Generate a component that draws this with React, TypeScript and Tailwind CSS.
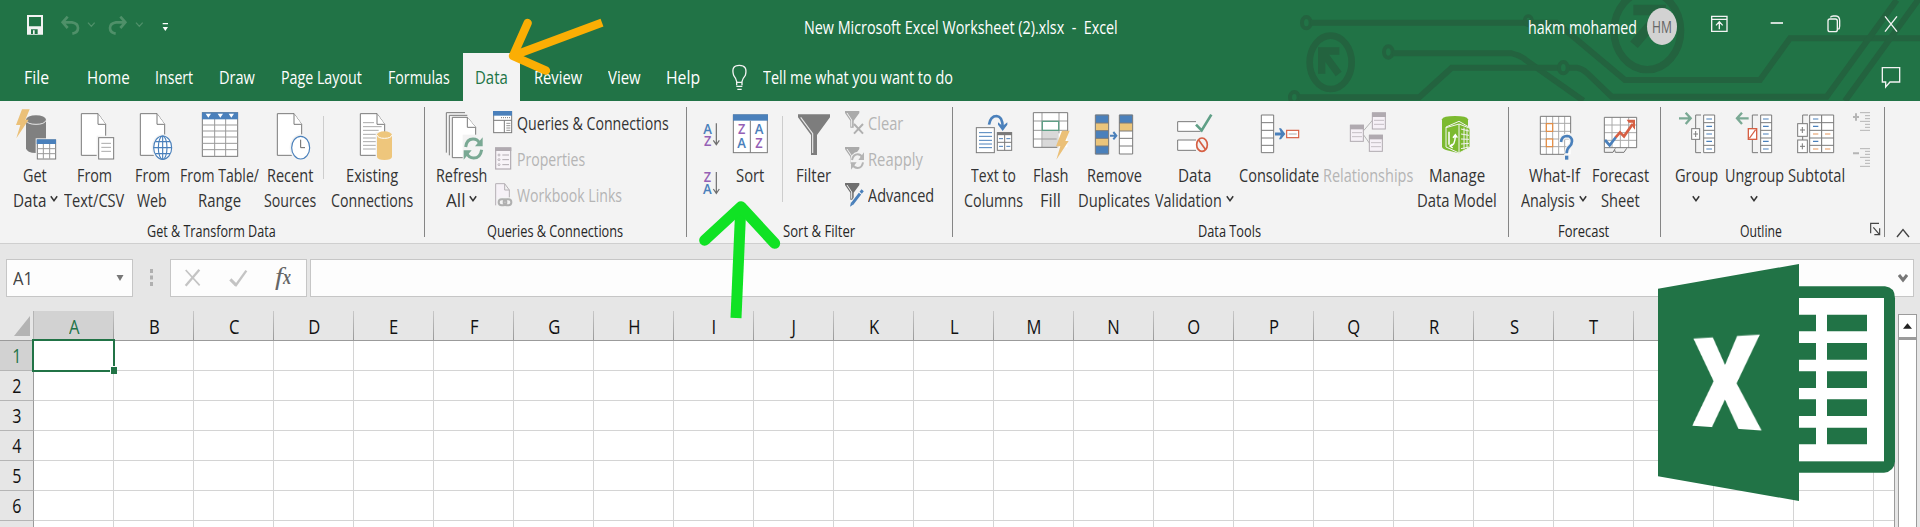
import React, { useLayoutEffect, useRef, ReactNode } from "react";

/** Single line of text condensed (or widened) to fill the width of its box. */
function Fit({ children, className = "" }: { children: ReactNode; className?: string }) {
  const box = useRef<HTMLSpanElement>(null);
  const inner = useRef<HTMLSpanElement>(null);
  useLayoutEffect(() => {
    if (box.current && inner.current) {
      const s = box.current.clientWidth / inner.current.offsetWidth;
      inner.current.style.transform = `scaleX(${s})`;
    }
  });
  return (
    <span ref={box} className={`block shrink-0 ${className}`}>
      <span ref={inner} className="inline-block origin-left whitespace-pre">
        {children}
      </span>
    </span>
  );
}

function Pic({ vb, className, children }: { vb: string; className: string; children: ReactNode }) {
  return (
    <svg viewBox={vb} className={`shrink-0 ${className}`} preserveAspectRatio="none" fill="none">
      {children}
    </svg>
  );
}

function Chevron({ className = "" }: { className?: string }) {
  return (
    <svg viewBox="0 0 8 8" className={`h-2 w-2 shrink-0 ${className}`} fill="none" stroke="currentColor" strokeWidth="1.5">
      <path d="M0.8 1.2 L4 5.6 L7.2 1.2" />
    </svg>
  );
}

type Line = [string, string];

function Big({ w, vb, icon, lines, arrow, arrowBelow, off }: {
  w: string; vb: string; icon: ReactNode; lines: Line[]; arrow?: boolean; arrowBelow?: boolean; off?: boolean;
}) {
  return (
    <div className={`flex shrink-0 flex-col items-center ${w} ${off ? "text-[#b5b5b5]" : "text-[#333]"}`}>
      <Pic vb={vb} className="mb-px h-[61px] w-full">{icon}</Pic>
      {lines.map(([t, tw], i) => (
        <div key={t} className="flex h-[25px] items-center gap-[4px] text-[18px] leading-[25px]">
          <Fit className={tw}>{t}</Fit>
          {arrow && i === lines.length - 1 && <Chevron className="-mt-1" />}
        </div>
      ))}
      {arrowBelow && <div className="flex h-[25px] items-center"><Chevron className="-mt-1" /></div>}
    </div>
  );
}

function Small({ vb, icon, text, w, off }: { vb: string; icon: ReactNode; text: string; w: string; off?: boolean }) {
  return (
    <div className={`flex h-9 items-center gap-[2px] text-[18px] leading-[25px] ${off ? "text-[#b5b5b5]" : "text-[#333]"}`}>
      <Pic vb={vb} className="h-9 w-[22px]">{icon}</Pic>
      <Fit className={w}>{text}</Fit>
    </div>
  );
}

function Group({ w, label, lw, extra, pad = "", children }: {
  w: string; label: string; lw: string; extra?: ReactNode; pad?: string; children: ReactNode;
}) {
  return (
    <div className={`flex h-[142px] shrink-0 ${w}`}>
      <div className="flex min-w-0 flex-1 flex-col">
        <div className={`flex h-[119px] ${pad}`}>{children}</div>
        <div className="flex h-[22px] justify-center text-[16px] leading-[22px] text-[#262626]">
          <Fit className={lw}>{label}</Fit>
          {extra}
        </div>
      </div>
      <div className="mt-[6px] h-[130px] w-px bg-[#858585]" />
    </div>
  );
}

const G = "#7a7a7a";
const B = "#4a80bb";

const Page = ({ x }: { x: number }) => (
  <g stroke={G} strokeWidth="3" fill="#fff">
    <path d={`M${x} 341 H${x + 50} L${x + 73} 373 V466 H${x} Z`} />
    <path d={`M${x + 50} 341 V373 H${x + 73}`} />
  </g>
);

const Bolt = ({ x, y }: { x: number; y: number }) => (
  <path d={`M${x + 18} ${y} H${x + 41} L${x + 28} ${y + 31} H${x + 38} L${x + 1} ${y + 87} L${x + 13} ${y + 47} H${x} Z`} fill="#ebc078" />
);

const getData = (
  <>
    <path d="M78 359 V445 Q80 459 108 459 Q138 459 138 445 V359 Z" fill="#808080" />
    <ellipse cx="108" cy="359" rx="30" ry="13" fill="#808080" />
    <path d="M78 361 Q82 373 108 373 Q134 373 138 361" stroke="#e8e8e8" strokeWidth="3" />
    <Bolt x={48} y={328} />
    <rect x="107" y="415" width="65" height="67" fill="#f3f3f3" />
    <rect x="112" y="420" width="55" height="57" fill="#fff" stroke={G} strokeWidth="3" />
    <rect x="110" y="418" width="58" height="14" fill={B} />
    <path d="M130 432 V476 M149 432 V476 M112 446 H167 M112 461 H167" stroke="#999" strokeWidth="3" />
  </>
);
const fromCsv = (
  <>
    <Page x={244} />
    <rect x="290" y="407" width="56" height="76" fill="#f3f3f3" />
    <rect x="296" y="413" width="45" height="64" fill="#fff" stroke={G} strokeWidth="3" />
    <path d="M304 430 H333 M304 442 H333 M304 454 H333" stroke="#aaa" strokeWidth="3" />
  </>
);
const fromWeb = (
  <>
    <Page x={421} />
    <ellipse cx="488" cy="443" rx="33" ry="40" fill="#f3f3f3" />
    <g stroke={B} strokeWidth="3.4" fill="#fff">
      <ellipse cx="488" cy="443" rx="27" ry="35" />
      <ellipse cx="488" cy="443" rx="13" ry="35" />
      <path d="M488 408 V478 M461 443 H515 M466 425 H510 M466 461 H510" />
    </g>
  </>
);
const fromTable = (
  <>
    <rect x="607" y="338" width="106" height="131" fill="#fff" stroke={G} strokeWidth="3" />
    <path d="M644 357 V469 M677 357 V469 M607 375 H713 M607 393 H713 M607 411 H713 M607 430 H713 M607 449 H713" stroke="#999" strokeWidth="3" />
    <rect x="606" y="337" width="108" height="21" fill={B} />
    <path d="M617 341 h16 l-8 12z M653 341 h16 l-8 12z M686 341 h16 l-8 12z" fill="#fff" />
  </>
);
const recent = (
  <>
    <Page x={832} />
    <ellipse cx="902" cy="443" rx="33" ry="40" fill="#f3f3f3" />
    <ellipse cx="902" cy="443" rx="27" ry="34" fill="#fff" stroke={B} strokeWidth="3.5" />
    <path d="M902 419 V443 H915" stroke="#666" strokeWidth="3" />
  </>
);
const existing = (
  <>
    <Page x={1081} />
    <path d="M1089 368 H1122 M1089 380 H1145 M1089 391 H1136 M1089 403 H1136 M1089 414 H1130 M1089 425 H1130 M1089 436 H1130 M1089 447 H1130" stroke="#aaa" strokeWidth="3" />
    <path d="M1127 396 H1180 V482 H1127 Z" fill="#f3f3f3" />
    <path d="M1131 405 V471 Q1133 480 1153 480 Q1174 480 1176 471 V405 Z" fill="#eec67c" />
    <ellipse cx="1153" cy="405" rx="23" ry="11" fill="#eec67c" />
    <path d="M1131 405 Q1134 415 1153 415 Q1173 415 1176 405" stroke="#fff" strokeWidth="3" />
  </>
);
const refreshAll = (
  <>
    <g stroke={G} strokeWidth="3" fill="#fff">
      <path d="M1339 458 V338 H1395 M1348 466 V346 H1402" fill="none" />
      <path d="M1357 352 H1402 L1427 382 V473 H1357 Z" />
      <path d="M1402 352 V382 H1427" />
    </g>
    <rect x="1388" y="404" width="66" height="80" fill="#f3f3f3" />
    <g stroke="#7aa994" strokeWidth="9">
      <path d="M1397 441 Q1400 417 1419 417 Q1433 417 1439 430" />
      <path d="M1445 449 Q1441 474 1421 474 Q1406 474 1400 459" />
    </g>
    <path d="M1448 412 V439 H1425 Z M1391 479 V451 H1415 Z" fill="#7aa994" />
  </>
);
const qcIcon = (
  <>
    <rect x="41" y="335" width="54" height="63" fill="#fff" stroke={G} strokeWidth="3" />
    <rect x="39" y="333" width="57" height="14" fill={B} />
    <path d="M63 353 H92" stroke={G} strokeWidth="3" strokeDasharray="3 3" />
    <path d="M41 361 H95 M73 361 V398" stroke={G} strokeWidth="3" />
    <path d="M79 370 H91 M79 377 H91 M79 384 H91 M79 391 H91" stroke={G} strokeWidth="2.4" />
  </>
);
const propIcon = (
  <>
    <rect x="47" y="444" width="45" height="63" fill="#f8f4f8" stroke="#b0aab0" strokeWidth="3.5" />
    <rect x="45" y="442" width="49" height="11" fill="#b0aab0" />
    <path d="M67 465 H87 M67 479 H87 M67 494 H87" stroke="#b0aab0" strokeWidth="3" />
    <g stroke="#b0aab0" strokeWidth="2.5"><circle cx="57" cy="465" r="3" /><circle cx="57" cy="479" r="3" /><circle cx="57" cy="494" r="3" /></g>
  </>
);
const linkIcon = (
  <>
    <path d="M47 616 V551 H74 L88 570 V595 M74 551 V570 H88" fill="#f6f1f7" stroke="#b5b0b5" strokeWidth="3" />
    <rect x="51" y="592" width="48" height="32" fill="#f3f3f3" />
    <g stroke="#b0b0b0" strokeWidth="6"><rect x="56" y="598" width="23" height="18" rx="9" /><rect x="71" y="598" width="23" height="18" rx="9" /></g>
  </>
);

const iconFont = { fontFamily: "Open Sans, sans-serif", fontWeight: 600 } as const;
const V = "#9560b5";

/** Two letters stacked in one column; A is blue, Z is violet. */
const LetterColumn = ({ x, y, gap, order }: { x: number; y: number; gap: number; order: string }) => (
  <text fontSize="45">
    {[...order].map((c, i) => (
      <tspan key={c} x={c === "A" ? x : x + 2} y={y + i * gap} fill={c === "A" ? B : V} textLength={c === "A" ? 26 : 22} lengthAdjust="spacingAndGlyphs">
        {c}
      </tspan>
    ))}
  </text>
);

const sortPair = (
  <g {...iconFont}>
    <LetterColumn x={670} y={403} gap={35} order="AZ" />
    <LetterColumn x={669} y={546} gap={37} order="ZA" />
    <path d="M709 370 V433 M700 421 L709 434 L718 421 M709 516 V579 M700 567 L709 580 L718 567" stroke="#6e6e6e" strokeWidth="3.6" />
  </g>
);
const sortIcon = (
  <g {...iconFont}>
    <rect x="760" y="345" width="102" height="113" fill="#fff" stroke={G} strokeWidth="3" />
    <rect x="759" y="343" width="105" height="19" fill={B} />
    <path d="M811 362 V458" stroke={G} strokeWidth="3" />
    <LetterColumn x={772} y={403} gap={42} order="ZA" />
    <LetterColumn x={824} y={403} gap={42} order="AZ" />
  </g>
);
const filterIcon = (
  <>
    <path d="M954 343 H1050 V352 L1011 405 V465 H993 V405 L954 352 Z" fill="#7d7d7d" />
    <path d="M962 352 L998 401 V459" stroke="#e8e8e8" strokeWidth="3.5" />
  </>
);
const Funnel = ({ y, c }: { y: number; c: string }) => (
  <>
    <path d={`M1095 ${y} H1138 V${y + 6} L1121 ${y + 29} V${y + 50} H1111 V${y + 29} L1095 ${y + 6} Z`} fill={c} />
    <path d={`M1101 ${y + 6} L1115 ${y + 27} V${y + 47}`} stroke="#f0f0f0" strokeWidth="3" />
  </>
);
const clearIcon = (
  <><Funnel y={333} c="#aaa" /><path d="M1122 372 L1149 401 M1149 372 L1122 401" stroke="#b0b0b0" strokeWidth="6" /></>
);
const reapplyIcon = (
  <>
    <Funnel y={441} c="#aaa" />
    <ellipse cx="1133" cy="483" rx="22" ry="28" fill="#f3f3f3" />
    <g stroke="#b4b4b4" strokeWidth="6"><path d="M1116 480 Q1120 463 1133 463 Q1143 463 1147 473" /><path d="M1149 487 Q1146 504 1133 504 Q1122 504 1118 494" /></g>
    <path d="M1152 457 V480 H1135 Z M1113 509 V487 H1130 Z" fill="#b4b4b4" />
  </>
);
const advIcon = (
  <>
    <Funnel y={549} c="#6f6f6f" />
    <path d="M1118 610 L1145 574" stroke="#f3f3f3" strokeWidth="15" />
    <path d="M1117 611 L1140 581 M1142 578 L1148 571" stroke={B} strokeWidth="9" />
    <path d="M1110 620 L1113 607 L1121 613 Z" fill={B} />
  </>
);
const textCols = (
  <>
    <rect x="49" y="383" width="54" height="75" fill="#fff" stroke={G} strokeWidth="3" />
    <path d="M57 398 H96 M57 409 H96 M57 421 H96 M57 432 H96 M57 443 H96" stroke={B} strokeWidth="3" />
    <rect x="112" y="398" width="43" height="53" fill="#fff" stroke={G} strokeWidth="3" />
    <path d="M111 401 H156" stroke={G} strokeWidth="9" />
    <path d="M134 405 V451 M112 427 H155" stroke={G} strokeWidth="3" />
    <path d="M117 416 H129 M139 416 H151 M117 439 H129 M139 439 H151" stroke={B} strokeWidth="3" />
    <path d="M87 374 Q91 348 110 348 Q127 349 128 380" stroke={B} strokeWidth="8" />
    <path d="M114 367 L128 378 L142 367 V374 L128 393 L114 374 Z" fill={B} />
  </>
);
const flash = (
  <>
    <rect x="220" y="338" width="102" height="104" fill="#fff" />
    <rect x="248" y="390" width="48" height="52" fill="#d9d9d9" />
    <path d="M246 338 V442 M297 338 V400 M220 363 H323 M220 391 H323 M220 417 H290" stroke="#999" strokeWidth="3" />
    <path d="M323 395 V338 H220 V442 H292" stroke={G} strokeWidth="3" />
    <rect x="247" y="364" width="49" height="27" fill="#fff" stroke="#5f9f86" strokeWidth="4" />
    <Bolt x={288} y={392} />
  </>
);
const remove = (
  <>
    <rect x="406" y="344" width="40" height="119" fill={B} />
    <path d="M406 369 H446 V392 H406 Z M406 415 H446 V438 H406 Z" fill="#ebc57b" />
    <rect x="478" y="344" width="40" height="119" fill="#fff" />
    <rect x="478" y="344" width="40" height="25" fill={B} />
    <rect x="478" y="369" width="40" height="24" fill="#ebc57b" />
    <path d="M406 345 H446 V462 H406 Z M406 369 H446 M406 392 H446 M406 415 H446 M406 438 H446 M478 345 H518 V462 H478 Z M478 369 H518 M478 393 H518 M478 415 H518 M478 438 H518" stroke={G} strokeWidth="3" />
    <path d="M450 407 H468 M460 396 L469 407 L460 418" stroke={B} strokeWidth="6" />
  </>
);
const validation = (
  <>
    <path d="M708 365 H653 V394 H722 M708 420 H653 V451 H708" fill="#fff" stroke={G} strokeWidth="3" />
    <path d="M708 374 L725 391 L754 344" stroke="#5f9f86" strokeWidth="8" />
    <ellipse cx="726" cy="434" rx="16" ry="20" fill="#f3f3f3" stroke="#d65f43" strokeWidth="5" />
    <path d="M716 420 L737 449" stroke="#d65f43" strokeWidth="5" />
  </>
);
const consolidate = (
  <>
    <path d="M904 345 H941 V458 H904 Z M904 368 H941 M904 391 H941 M904 414 H941 M904 436 H941" fill="#fff" stroke={G} strokeWidth="3" />
    <path d="M945 402 H968" stroke={B} strokeWidth="9" />
    <path d="M957 385 H963 L976 402 L963 418 H957 L964 402 Z" fill={B} />
    <rect x="980" y="391" width="36" height="22" fill="#fff" stroke="#d65f43" strokeWidth="3.5" />
    <path d="M986 402 H1010" stroke="#aaa" strokeWidth="3" />
  </>
);
const MiniTable = ({ x, y }: { x: number; y: number }) => (
  <>
    <rect x={x + 1} y={y + 2} width="39" height="48" fill="#f6f1f7" stroke="#b0aab0" strokeWidth="3" />
    <rect x={x} y={y} width="42" height="14" fill="#b0aab0" />
    <path d={`M${x + 6} ${y + 24} h30 M${x + 6} ${y + 36} h30`} stroke="#c5bfc5" strokeWidth="3" />
  </>
);
const relations = (
  <>
    <path d="M1211 392 L1238 360 M1211 405 L1230 432" stroke="#b5b5b5" strokeWidth="3" />
    <MiniTable x={1236} y={337} /><MiniTable x={1170} y={374} /><MiniTable x={1227} y={404} />
  </>
);
const model = (
  <>
    <path d="M6 358 Q9 348 45 348 Q81 348 84 358 V440 L57 460 L18 450 Q6 445 6 440 Z" fill="#7cba30" />
    <path d="M18 381 L57 364 L90 383 V442 L57 459 L18 441 Z" fill="#7cba30" stroke="#f3f3f3" strokeWidth="3" />
    <path d="M18 383 L57 372 V458 M57 372 L90 385" stroke="#f3f3f3" strokeWidth="3" />
    <path d="M63 387 L87 393 M63 402 L87 406 M63 417 L87 418 M63 432 L87 430 M63 446 L87 441 M72 383 V448 M81 386 V444" stroke="#f3f3f3" strokeWidth="3" />
    <path d="M27 395 V434 M46 408 Q45 436 31 438 M38 432 L30 438 L38 444 M39 413 L46 404 L52 413" stroke="#fff" strokeWidth="4.5" />
  </>
);
const whatIf = (
  <>
    <rect x="301" y="349" width="91" height="114" fill="#fff" />
    <path d="M319 349 V463 M338 349 V463 M356 349 V463 M374 349 V463 M301 370 H392 M301 394 H392 M301 417 H392 M301 440 H392" stroke="#aaa" strokeWidth="3" />
    <path d="M392 400 V349 H301 V463 H372" stroke={G} strokeWidth="3" />
    <g fill="#fff" stroke="#e58a3c" strokeWidth="3.5"><rect x="319" y="371" width="19" height="23" /><rect x="319" y="417" width="19" height="23" /></g>
    <path d="M363 426 Q365 408 381 408 Q396 409 396 424 Q396 433 388 440 Q380 448 380 460" stroke="#f3f3f3" strokeWidth="15" />
    <path d="M363 426 Q365 408 381 408 Q396 409 396 424 Q396 433 388 440 Q380 448 380 460" stroke={B} strokeWidth="8" />
    <rect x="375" y="467" width="10" height="12" fill={B} />
  </>
);
const forecast = (
  <>
    <rect x="493" y="352" width="97" height="91" fill="#fff" />
    <path d="M516 352 V443 M541 352 V443 M566 352 V443 M493 375 H590 M493 398 H590 M493 421 H590" stroke="#aaa" strokeWidth="3" />
    <path d="M493 443 V352 H590 V443 H493 M493 443 V457 H519 L526 445 M526 457 H552 L560 445 M526 457 L524 450" stroke={G} strokeWidth="3" />
    <path d="M495 420 L509 436 L528 411" stroke={B} strokeWidth="8" />
    <path d="M527 412 L540 397 L552 409 L578 372" stroke="#d65f43" strokeWidth="8" />
    <path d="M560 359 H585 V389 L578 381 V368 H566 Z" fill="#d65f43" />
  </>
);
const Stack = ({ x, w = 33 }: { x: number; w?: number }) => (
  <path d={`M${x} 345 h${w} v113 h-${w} z M${x} 368 h${w} M${x} 391 h${w} M${x} 414 h${w} M${x} 436 h${w}`} fill="#fff" stroke={G} strokeWidth="3" />
);
const Dashes = ({ x }: { x: number }) => (
  <path d={`M${x} 357 h17 M${x} 379 h17 M${x} 402 h17 M${x} 424 h17 M${x} 447 h17`} stroke={B} strokeWidth="3.5" />
);
const groupIcon = (
  <>
    <Stack x={791} /><Dashes x={799} />
    <path d="M783 345 H767 V458 H783" stroke={G} strokeWidth="3" />
    <rect x="755" y="386" width="24" height="32" fill="#fff" stroke={G} strokeWidth="3" />
    <path d="M760 402 H774 M767 393 V411" stroke={G} strokeWidth="3" />
    <path d="M717 355 H751 M737 338 L752 355 L737 372" stroke="#7aa994" strokeWidth="7" />
  </>
);
const ungroupIcon = (
  <>
    <Stack x={962} /><Dashes x={969} />
    <path d="M954 345 H937 V458 H954" stroke={G} strokeWidth="3" />
    <rect x="925" y="386" width="25" height="32" fill="#fff" stroke="#d65f43" strokeWidth="4" />
    <path d="M928 415 L947 389" stroke="#d65f43" strokeWidth="3.5" />
    <path d="M926 355 H892 M906 338 L891 355 L906 372" stroke="#7aa994" strokeWidth="7" />
  </>
);
const subtotalIcon = (
  <>
    <path d="M1104 345 H1088 V450" stroke={G} strokeWidth="3" />
    <Stack x={1109} w={36} /><Stack x={1145} w={36} />
    <path d="M1119 357 h16 M1119 379 h16 M1119 424 h16" stroke={B} strokeWidth="3.5" />
    <path d="M1119 402 h16 M1155 402 h16 M1119 447 h16 M1155 447 h16" stroke="#e5965a" strokeWidth="3.5" />
    <g fill="#fff" stroke={G} strokeWidth="3">
      <rect x="1073" y="371" width="29" height="38" /><rect x="1073" y="420" width="29" height="38" />
      <path d="M1080 390 H1095 M1087 381 V399 M1080 439 H1095 M1087 430 V448" />
    </g>
  </>
);
const detail = (
  <g stroke="#b5b5b5" strokeWidth="3">
    <path d="M1239 351 H1257 M1248 340 V362 M1239 460 H1257" strokeWidth="6" />
    <path d="M1260 338 H1290 M1275 347 H1290 M1275 356 H1290 M1260 364 H1290 M1275 373 H1290 M1275 382 H1290 M1260 391 H1290" />
    <path d="M1260 446 H1290 M1275 454 H1290 M1275 463 H1290 M1260 472 H1290 M1275 481 H1290 M1275 490 H1290 M1260 499 H1290" />
  </g>
);

const tabs: [string, string, string][] = [
  ["File", "w-[73px]", "w-[25px]"],
  ["Home", "w-[70px]", "w-[43px]"],
  ["Insert", "w-[62px]", "w-[38px]"],
  ["Draw", "w-[63px]", "w-[36px]"],
  ["Page Layout", "w-[106px]", "w-[81px]"],
  ["Formulas", "w-[89px]", "w-[62px]"],
  ["Data", "w-[57px]", "w-[33px]"],
  ["Review", "w-[75px]", "w-[48px]"],
  ["View", "w-[58px]", "w-[33px]"],
  ["Help", "w-[60px]", "w-[34px]"],
];

const columns = [..."ABCDEFGHIJKLMNOPQRST", "", "", ""];

function Header() {
  return (
    <header className="relative h-[101px] bg-[#217346] text-white">
      <svg viewBox="960 0 1920 303" className="absolute right-0 top-0 h-[101px] w-[640px]" preserveAspectRatio="none" fill="none" stroke="#23633f" strokeWidth="18">
        <ellipse cx="1039" cy="68" rx="13" ry="17" strokeWidth="12" />
        <path d="M1052 68 H1790 L1995 240 H2400 L2490 115 H2880" />
        <ellipse cx="1705" cy="62" rx="11" ry="14" strokeWidth="11" />
        <ellipse cx="1112" cy="187" rx="63" ry="80" strokeWidth="20" />
        <path d="M1138 153 H1085 V221 M1087 155 L1136 222" strokeWidth="22" />
        <ellipse cx="1285" cy="156" rx="13" ry="17" strokeWidth="12" />
        <path d="M1298 160 H1655 Q1680 165 1700 182 L1870 302" />
        <ellipse cx="1003" cy="292" rx="13" ry="16" strokeWidth="12" />
        <path d="M1016 292 H1378 L1475 203 H1797 M1823 203 H1850 Q1866 206 1880 218 L1955 290 H2600 L2810 0 M2655 303 L2880 -8" />
        <ellipse cx="1810" cy="203" rx="13" ry="17" strokeWidth="12" />
        <ellipse cx="2062" cy="92" rx="100" ry="117" strokeWidth="22" />
        <path d="M2020 30 H2118" strokeWidth="32" />
        <path d="M2022 134 L2080 66" strokeWidth="30" />
      </svg>
      <div className="relative flex h-[53px] items-center">
        <svg viewBox="0 0 480 159" className="h-[53px] w-[160px] shrink-0" fill="none" preserveAspectRatio="none">
          <path d="M81 45 H129 V104 H81 Z M87 51 V79 H123 V51 Z M93 88 V102 H99 V91 H104 V102 H113 V88 Z" fill="#f3f3f3" fillRule="evenodd" />
          <g stroke="#4f9069" strokeWidth="8">
            <path d="M188 67 H216 Q234 70 234 84 Q234 98 217 101 M203 50 L188 67 L203 84" />
            <path d="M376 67 H348 Q330 70 330 84 Q330 98 347 101 M361 50 L376 67 L361 84" />
            <path d="M264 68 L274 79 L284 68 M408 68 L418 79 L428 68" strokeWidth="4" />
          </g>
        </svg>
        <svg viewBox="480 65 36 30" className="mt-[1px] h-[10px] w-[12px] shrink-0" fill="#fff" preserveAspectRatio="none">
          <path d="M488 68 H504 V72 H488 Z M488 80 H504 L496 92 Z" />
        </svg>
        <Fit className="ml-[632px] w-[314px] text-[18.5px] leading-[24px]">{"New Microsoft Excel Worksheet (2).xlsx  -  Excel"}</Fit>
        <Fit className="ml-[410px] w-[109px] text-[18.5px] leading-[24px]">hakm mohamed</Fit>
        <div className="ml-[10px] flex h-[37px] w-[30px] shrink-0 items-center justify-center rounded-[50%] bg-[#d2d2d2] text-[17px] leading-[24px] text-[#666]">
          <Fit className="w-[20px]">HM</Fit>
        </div>
        <svg viewBox="735 0 705 159" className="ml-auto h-[53px] w-[235px] shrink-0" preserveAspectRatio="none" fill="none" stroke="#f3f3f3" strokeWidth="4">
          <path d="M815 49 H861 V94 H815 Z M815 58 H861 M838 88 V66 M828 76 L838 65 L848 76" />
          <path d="M992 69 H1029" strokeWidth="5" />
          <rect x="1164" y="57" width="28" height="38" rx="6" />
          <path d="M1171 52 Q1174 48 1180 48 H1188 Q1199 49 1199 62 V78 Q1199 86 1195 88" />
          <path d="M1335 49 L1371 95 M1371 49 L1335 95" />
        </svg>
      </div>
      <nav className="relative flex h-12 text-[19px] leading-[48px]">
        {tabs.map(([name, w, tw]) => (
          <div key={name} className={`flex shrink-0 justify-center ${w} ${name === "Data" ? "bg-[#f3f3f3] text-[#217346]" : ""}`}>
            <Fit className={tw}>{name}</Fit>
          </div>
        ))}
        <svg viewBox="750 159 60 144" className="ml-[17px] h-12 w-5 shrink-0" preserveAspectRatio="none" fill="none" stroke="#f3f3f3" strokeWidth="4">
          <path d="M770 256 V245 Q768 235 761 226 Q752 196 778 196 Q804 196 796 226 Q788 235 786 245 V256 M770 247 H786 M769 259 H787 M772 268 H785" />
        </svg>
        <Fit className="ml-[13px] w-[190px]">Tell me what you want to do</Fit>
        <svg viewBox="1320 159 66 144" className="ml-auto mr-[18px] h-12 w-[22px] shrink-0" preserveAspectRatio="none" fill="none" stroke="#f3f3f3" strokeWidth="4">
          <path d="M1327 203 H1379 V246 H1350 L1337 261 V246 H1327 Z" />
        </svg>
      </nav>
    </header>
  );
}

function Ribbon() {
  return (
    <section className="flex h-[143px] border-b border-[#cfcfcf] bg-[#f3f3f3]">
      <Group w="w-[425px]" label="Get & Transform Data" lw="w-[129px] -ml-[2px]" pad="pl-[5px]">
        <Big w="w-[60px]" vb="15 303 180 183" icon={getData} lines={[["Get", "w-[24px]"], ["Data", "w-[33px]"]]} arrow />
        <Big w="w-[58px]" vb="195 303 174 183" icon={fromCsv} lines={[["From", "w-[35px]"], ["Text/CSV", "w-[60px]"]]} />
        <Big w="w-[58px]" vb="369 303 174 183" icon={fromWeb} lines={[["From", "w-[35px]"], ["Web", "w-[30px]"]]} />
        <Big w="w-[76px]" vb="543 303 228 183" icon={fromTable} lines={[["From Table/", "w-[79px]"], ["Range", "w-[43px]"]]} />
        <Big w="w-[66px]" vb="771 303 198 183" icon={recent} lines={[["Recent", "w-[46px]"], ["Sources", "w-[52px]"]]} />
        <div className="mt-[15px] h-[63px] w-px shrink-0 bg-[#cdcdcd]" />
        <Big w="w-[95px]" vb="972 303 285 183" icon={existing} lines={[["Existing", "w-[52px]"], ["Connections", "w-[82px]"]]} />
      </Group>
      <Group w="w-[262px]" label="Queries & Connections" lw="w-[136px] -ml-[2px]" pad="pl-[5px]">
        <Big w="w-[63px]" vb="1290 303 189 183" icon={refreshAll} lines={[["Refresh", "w-[51px]"], ["All", "w-[19px]"]]} arrow />
        <div className="flex flex-col pt-1">
          <Small vb="39 315 66 108" icon={qcIcon} text="Queries & Connections" w="w-[152px]" />
          <Small vb="39 423 66 108" icon={propIcon} text="Properties" w="w-[68px]" off />
          <Small vb="39 531 66 108" icon={linkIcon} text="Workbook Links" w="w-[105px]" off />
        </div>
      </Group>
      <Group w="w-[266px]" label="Sort & Filter" lw="w-[72px] -ml-[2px]">
        <Pic vb="621 303 114 303" className="h-[101px] w-[38px]">{sortPair}</Pic>
        <Big w="w-[50px]" vb="735 303 150 183" icon={sortIcon} lines={[["Sort", "w-[28px]"]]} />
        <div className="ml-[7px] mt-[15px] h-[86px] w-px shrink-0 bg-[#cdcdcd]" />
        <Big w="w-[61px]" vb="909 303 183 183" icon={filterIcon} lines={[["Filter", "w-[35px]"]]} />
        <div className="flex flex-col pt-1">
          <Small vb="1092 315 66 108" icon={clearIcon} text="Clear" w="w-[35px]" off />
          <Small vb="1092 423 66 108" icon={reapplyIcon} text="Reapply" w="w-[55px]" off />
          <Small vb="1092 531 66 108" icon={advIcon} text="Advanced" w="w-[66px]" />
        </div>
      </Group>
      <Group w="w-[556px]" label="Data Tools" lw="w-[63px] -ml-[2px]" pad="pl-2">
        <Big w="w-[65px]" vb="3 303 195 183" icon={textCols} lines={[["Text to", "w-[45px]"], ["Columns", "w-[59px]"]]} />
        <Big w="w-[49px]" vb="198 303 147 183" icon={flash} lines={[["Flash", "w-[35px]"], ["Fill", "w-[21px]"]]} />
        <Big w="w-[78px]" vb="345 303 234 183" icon={remove} lines={[["Remove", "w-[55px]"], ["Duplicates", "w-[72px]"]]} />
        <Big w="w-[82px]" vb="579 303 246 183" icon={validation} lines={[["Data", "w-[33px]"], ["Validation", "w-[67px]"]]} arrow />
        <Big w="w-[88px]" vb="825 303 264 183" icon={consolidate} lines={[["Consolidate", "w-[80px]"]]} />
        <Big w="w-[90px]" vb="1089 303 270 183" icon={relations} lines={[["Relationships", "w-[90px]"]]} off />
        <Big w="w-[87px]" vb="-81 303 261 183" icon={model} lines={[["Manage", "w-[56px]"], ["Data Model", "w-[80px]"]]} />
      </Group>
      <Group w="w-[152px]" label="Forecast" lw="w-[51px] -ml-[2px]" pad="pl-[6px]">
        <Big w="w-[78px]" vb="225 303 234 183" icon={whatIf} lines={[["What-If", "w-[51px]"], ["Analysis", "w-[54px]"]]} arrow />
        <Big w="w-[55px]" vb="459 303 165 183" icon={forecast} lines={[["Forecast", "w-[57px]"], ["Sheet", "w-[39px]"]]} />
      </Group>
      <Group
        w="w-[224px]" label="Outline" lw="ml-[79px] w-[42px]" pad="pl-2"
        extra={
          <svg viewBox="1287 668 39 48" className="ml-auto mr-[2px] mt-[1px] h-4 w-[13px]" fill="none" stroke="#444" strokeWidth="3.5" preserveAspectRatio="none">
            <path d="M1292 705 V675 H1317 M1300 687 L1318 708 M1319 690 V709 H1303" />
          </svg>
        }
      >
        <Big w="w-[54px]" vb="687 303 162 183" icon={groupIcon} lines={[["Group", "w-[43px]"]]} arrowBelow />
        <Big w="w-[62px]" vb="849 303 186 183" icon={ungroupIcon} lines={[["Ungroup", "w-[59px]"]]} arrowBelow />
        <Big w="w-[62px]" vb="1035 303 186 183" icon={subtotalIcon} lines={[["Subtotal", "w-[57px]"]]} />
        <Pic vb="1221 303 78 225" className="h-[75px] w-[26px]">{detail}</Pic>
      </Group>
      <div className="flex flex-1 items-end pb-[5px] pl-[11px]">
        <svg viewBox="0 0 14 10" className="h-[10px] w-[14px]" fill="none" stroke="#444" strokeWidth="1.4"><path d="M1 9 L7 1.5 L13 9" /></svg>
      </div>
    </section>
  );
}

function FormulaBar() {
  return (
    <section className="flex h-[67px] bg-[#e6e6e6] pl-[6px] pt-[15px]">
      <div className="flex h-[38px] w-[127px] shrink-0 items-center justify-between border border-[#c6c6c6] bg-[#fdfdfd] pl-[6px] pr-2 text-[19px] leading-[36px] text-[#444]">
        <Fit className="w-[20px]">A1</Fit>
        <svg viewBox="0 0 8 6" className="h-[6px] w-2" fill="#777"><path d="M0.5 0 H7.5 L4 6 Z" /></svg>
      </div>
      <svg viewBox="0 0 3 17" className="ml-[17px] mt-[10px] h-[17px] w-[3px] shrink-0" fill="#b0b0b0"><path d="M0 0 H3 V4 H0 Z M0 6.5 H3 V10.5 H0 Z M0 13 H3 V17 H0 Z" /></svg>
      <div className="ml-[17px] flex h-[38px] w-[137px] shrink-0 border border-[#c6c6c6] bg-[#fdfdfd]">
        <svg viewBox="513 60 270 108" className="h-9 w-[90px] shrink-0" preserveAspectRatio="none" fill="none" stroke="#c4c4c4">
          <path d="M557 90 L599 136" strokeWidth="5" /><path d="M598 89 L557 137" strokeWidth="7" />
          <path d="M691 118 L709 136" strokeWidth="9" /><path d="M706 138 L739 92" strokeWidth="7" />
        </svg>
        <div className="ml-[14px] flex font-['Liberation_Serif',serif] italic text-[#666]">
          <Fit className="w-[8px] text-[25px] leading-[33px]">f</Fit>
          <Fit className="w-[8px] text-[20px] font-bold leading-[34px]">x</Fit>
        </div>
      </div>
      <div className="ml-[3px] flex h-[38px] w-[1604px] shrink-0 items-center justify-end border border-[#c6c6c6] bg-[#fdfdfd] pr-[5px]">
        <svg viewBox="0 0 10 9" className="h-[9px] w-[10px]" fill="none" stroke="#777" strokeWidth="3"><path d="M1 1 L5 6 L9 1" /></svg>
      </div>
    </section>
  );
}

function Sheet() {
  return (
    <section className="flex h-[216px] bg-[#e6e6e6] text-[20px]">
      <div className="h-full w-[1895px] shrink-0 overflow-hidden border-r border-[#9b9b9b]">
        <div className="flex h-[30px] w-[1894px] overflow-hidden border-b border-[#9b9b9b]">
          <div className="flex h-[29px] w-[34px] shrink-0 items-end justify-end border-r border-[#b5b5b5] pb-[4px] pr-[3px]">
            <svg viewBox="0 0 16 20" className="h-5 w-4" fill="#b3b3b3"><path d="M16 0 V20 H0 Z" /></svg>
          </div>
          {columns.map((c, i) => (
            <div key={i} className="flex h-[29px] w-20 shrink-0">
              <div className={`flex w-[79px] justify-center pl-px leading-[31px] ${i === 0 ? "bg-[#d2d2d2] text-[#217346]" : "text-[#111]"}`}>
                <span className="scale-x-[0.83]">{c}</span>
              </div>
              <div className="w-px bg-linear-to-b from-[#c8c8c8] to-[#999]" />
            </div>
          ))}
        </div>
        {["1", "2", "3", "4", "5", "6", ""].map((r, ri) => (
          <div key={ri} className="flex h-[30px] w-[1894px] overflow-hidden">
            <div className={`flex w-[34px] shrink-0 items-center justify-center border-b border-r border-b-[#b5b5b5] border-r-[#9b9b9b] pt-px leading-[28px] ${ri === 0 ? "bg-[#d2d2d2] text-[#217346]" : "text-[#111]"}`}>
              <span className="scale-x-[0.8]">{r}</span>
            </div>
            {columns.map((_, ci) => (
              <div key={ci} className="w-20 shrink-0 border-b border-r border-[#d4d4d4] bg-white" />
            ))}
            <div className="flex-1 border-b border-[#d4d4d4] bg-white" />
          </div>
        ))}
      </div>
      <div className="ml-[3px] flex w-[19px] flex-col pt-[3px]">
        <div className="flex h-[24px] shrink-0 items-center justify-center border border-[#9b9b9b] bg-white">
          <svg viewBox="0 0 10 6" className="h-[6px] w-[9px]" fill="#222"><path d="M0 6 L5 0 L10 6 Z" /></svg>
        </div>
        <div className="w-full flex-1 border-x border-t-2 border-[#9b9b9b] bg-white" />
      </div>
    </section>
  );
}

export default function App() {
  return (
    <div className="relative h-[527px] w-[1920px] overflow-hidden bg-[#e6e6e6] font-['Open_Sans','Noto_Sans',sans-serif]">
      <Header />
      <Ribbon />
      <FormulaBar />
      <Sheet />

      {/* active cell outline with its fill handle */}
      <div className="absolute left-[32px] top-[339px] h-[33px] w-[83px] border-2 border-[#217346]">
        <div className="absolute -bottom-[4px] -right-[4px] h-[8px] w-[7px] border-l border-t border-white bg-[#217346]" />
      </div>

      {/* pointer to the Data tab */}
      <svg viewBox="75 51 300 180" className="absolute left-[505px] top-[17px] h-[60px] w-[100px]" fill="none" stroke="#fbae04" strokeWidth="25">
        <path d="M366 68 L100 167" />
        <path d="M143 69 L99 168 L198 212" strokeLinecap="round" strokeLinejoin="round" />
      </svg>

      {/* pointer to Sort */}
      <svg viewBox="165 54 270 366" className="absolute left-[695px] top-[198px] h-[122px] w-[90px]" fill="none" stroke="#10e224" strokeWidth="33">
        <path d="M302 90 L288 414" />
        <path d="M194 181 L303 80 L404 190" strokeLinecap="round" strokeLinejoin="round" />
      </svg>

      {/* Excel logo */}
      <div className="absolute left-[1658px] top-[264px] h-[237px] w-[238px]">
        <svg viewBox="414 102 714 711" className="h-full w-full" preserveAspectRatio="none">
          <path d="M837 169 H1095 Q1125 172 1125 205 V694 Q1122 726 1092 728 H837 Z" fill="#217346" />
          <rect x="830" y="204" width="262" height="490" fill="#fff" />
          <path d="M830 254 H888 V304 H830 Z M921 254 H1041 V304 H921 Z M830 339 H888 V389 H830 Z M921 339 H1041 V389 H921 Z M830 424 H888 V474 H830 Z M921 424 H1041 V474 H921 Z M830 508 H888 V558 H830 Z M921 508 H1041 V558 H921 Z M830 593 H888 V643 H830 Z M921 593 H1041 V643 H921 Z" fill="#217346" />
          <path d="M414 176 L837 102 V813 L414 739 Z" fill="#217346" />
        </svg>
        <div className="absolute left-[27px] top-[50px] flex h-[130px] w-[80px] items-center justify-center text-[128px] font-extrabold leading-[130px] text-white">
          <span className="[transform:perspective(258px)_rotateY(-20deg)_scaleX(0.8)]">X</span>
        </div>
      </div>
    </div>
  );
}
